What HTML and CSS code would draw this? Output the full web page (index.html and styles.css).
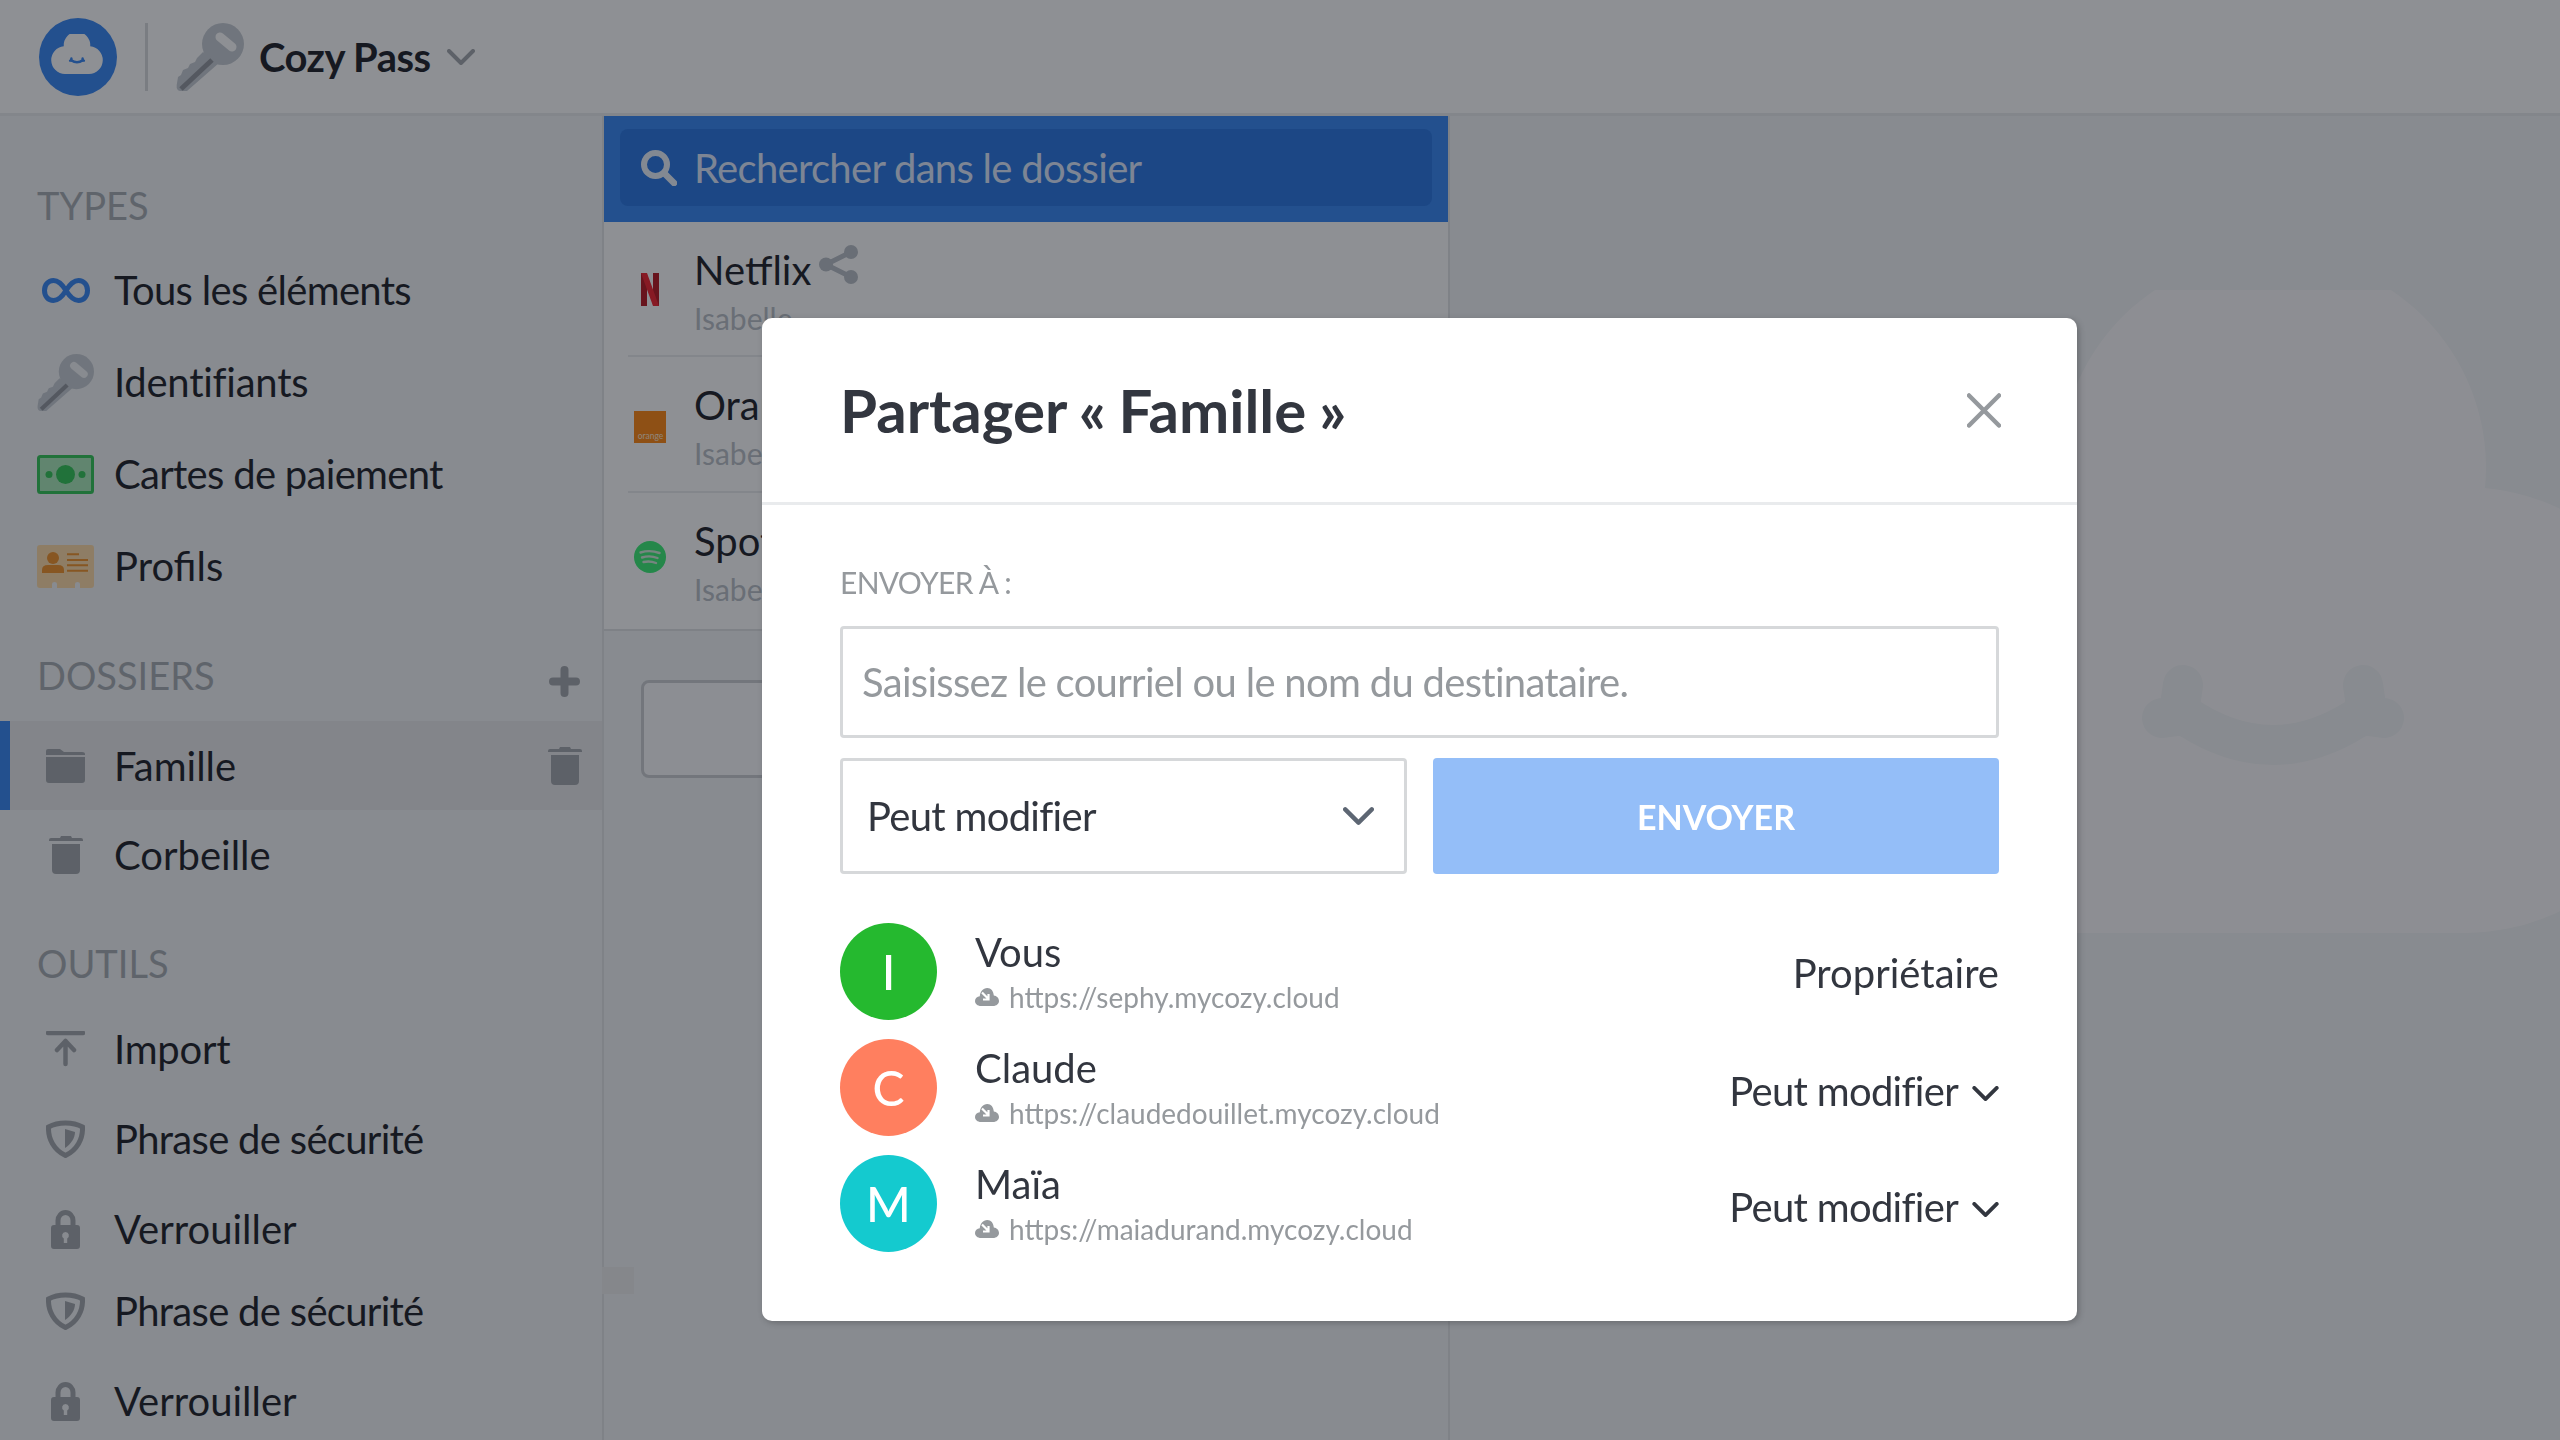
FILE: index.html
```html
<!DOCTYPE html>
<html lang="fr">
<head>
<meta charset="utf-8">
<title>Cozy Pass</title>
<link rel="stylesheet" href="styles.css">
</head>
<body>
<svg class="defs" width="0" height="0" aria-hidden="true">
  <defs>
    <symbol id="cloud" viewBox="0 0 832 643">
      <path fill="currentColor" d="M223 643A223 223 0 0 1 204 198A213 213 0 1 1 628 198A223 223 0 0 1 609 643Z"/>
      <g fill="none" stroke="var(--smile)" stroke-width="40" stroke-linecap="round">
        <path d="M323 422Q416 488 509 422"/>
        <path d="M326 395L322 422M305 428L328 425M506 395L510 422M527 428L504 425"/>
      </g>
    </symbol>
    <mask id="keyhole" maskUnits="userSpaceOnUse" x="0" y="0" width="68" height="68">
      <rect width="68" height="68" fill="#fff"/>
      <path d="M44 14L56 24" stroke="#000" stroke-width="9" stroke-linecap="round"/>
    </mask>
    <symbol id="key" viewBox="0 0 68 68">
      <g mask="url(#keyhole)"><circle cx="47" cy="21" r="21" fill="#c3c9d0"/></g>
      <path fill="#c3c9d0" d="M27 29L21 35L19 39L14 41L12 45L7 47L5 52L2 54L.7 62Q0 68 5 68H11L43 40Z"/>
      <path d="M5 66L36 37" stroke="#8b8f97" stroke-width="5" fill="none"/>
    </symbol>
    <symbol id="trash" viewBox="0 0 34 38">
      <path fill="#9da1a6" d="M12 0H22L23 2H32Q34 2 34 4V5H0V4Q0 2 2 2H11ZM3 8H31V34Q31 38 27 38H7Q3 38 3 34Z"/>
    </symbol>
    <symbol id="shield" viewBox="0 0 39 38">
      <path fill="none" stroke="#9da1a6" stroke-width="5" d="M19.5 3C26 3 32 4.500 36.500 7C37 19 31 30 19.500 35.500C8 30 2 19 2.500 7C7 4.500 13 3 19.500 3Z"/>
      <path fill="#9da1a6" d="M19 9L29 12C29 18 25 24 19 28Z"/>
    </symbol>
    <symbol id="lock" viewBox="0 0 29 39">
      <path fill="none" stroke="#9da1a6" stroke-width="5" d="M7 16V10.500A7.500 8 0 0 1 22 10.500V16"/>
      <path fill="#9da1a6" fill-rule="evenodd" d="M3 15H26Q29 15 29 18V36Q29 39 26 39H3Q0 39 0 36V18Q0 15 3 15ZM14.500 22A3.500 3.500 0 0 0 12.800 28.500V33H16.200V28.500A3.500 3.500 0 0 0 14.500 22Z"/>
    </symbol>
    <symbol id="minicloud" viewBox="0 0 24 18">
      <path fill="#95999d" d="M6 18C2.500 18 0 15.800 0 13C0 10.500 2 8.500 4.800 8.300C5 4 8 0 12.300 0C16 0 18.500 3 18.800 7.500C21.800 7.800 24 10.200 24 13C24 15.800 21.500 18 18 18Z"/>
      <path fill="none" stroke="#fff" stroke-width="2.200" d="M7 4.500L13.500 11M13.500 6V11.500H8"/>
    </symbol>
    <symbol id="chev" viewBox="0 0 28 16">
      <path fill="none" stroke="currentColor" stroke-width="4" stroke-linecap="round" stroke-linejoin="round" d="M2 2L14 14L26 2"/>
    </symbol>
  </defs>
</svg>

<header class="topbar">
  <svg class="logo" viewBox="0 0 78 78">
    <circle cx="39" cy="39" r="39" fill="#297ef2"/>
    <svg class="logo-inner" x="12" y="16" width="52" height="40"><use href="#cloud" width="52" height="40"/></svg>
  </svg>
  <span class="topbar-sep"></span>
  <svg class="topbar-key"><use href="#key"/></svg>
  <span class="app-name">Cozy Pass</span>
  <svg class="topbar-chev"><use href="#chev"/></svg>
</header>

<div class="shell">
  <nav class="sidebar">
    <div class="side-title">TYPES</div>
    <ul class="side-list types">
      <li class="side-item">
        <span class="side-ico"><svg class="ico-inf" viewBox="0 0 48 25"><path fill="none" stroke="#297ef2" stroke-width="5" d="M24 12.500C20 6 16.500 2.500 11.500 2.500C6 2.500 2.500 7 2.500 12.500C2.500 18 6 22.500 11.500 22.500C16.500 22.500 20 19 24 12.500C28 6 31.500 2.500 36.500 2.500C42 2.500 45.500 7 45.500 12.500C45.500 18 42 22.500 36.500 22.500C31.500 22.500 28 19 24 12.500Z"/></svg></span>
        <span class="snug">Tous les éléments</span>
      </li>
      <li class="side-item">
        <span class="side-ico"><svg class="ico-key"><use href="#key"/></svg></span>
        <span class="slight">Identifiants</span>
      </li>
      <li class="side-item">
        <span class="side-ico"><svg class="ico-money" viewBox="0 0 57 39">
          <rect x="1.500" y="1.500" width="54" height="36" rx="2" fill="#a5e8b5" stroke="#25c24a" stroke-width="3"/>
          <circle cx="28.500" cy="19.500" r="9.500" fill="#25c24a"/><circle cx="12" cy="19.500" r="3.500" fill="#25c24a"/><circle cx="45" cy="19.500" r="3.500" fill="#25c24a"/>
        </svg></span>
        <span class="snug">Cartes de paiement</span>
      </li>
      <li class="side-item">
        <span class="side-ico"><svg class="ico-card" viewBox="0 0 57 43">
          <path fill="#ffd9a0" d="M3 0H54Q57 0 57 3V40Q57 43 54 43H43V39Q43 37 40.500 37Q38 37 38 39V43H20V39Q20 37 17.500 37Q15 37 15 39V43H3Q0 43 0 40V3Q0 0 3 0Z"/>
          <circle cx="16" cy="13" r="6" fill="#f08a1a"/><path fill="#f08a1a" d="M5 28V25Q5 20 11 20H21Q27 20 27 25V28Z"/>
          <path stroke="#f08a1a" stroke-width="2" d="M30 9.300H42M30 15H51M30 20.300H51M30 25.700H51"/>
        </svg></span>
        <span>Profils</span>
      </li>
    </ul>

    <div class="side-title side-title-row">DOSSIERS
      <svg class="ico-plus" viewBox="0 0 31 31"><path stroke="#9da1a6" stroke-width="8" stroke-linecap="round" d="M15.500 4V27M4 15.500H27"/></svg>
    </div>
    <ul class="side-list folders">
      <li class="side-item folder active">
        <span class="side-ico"><svg class="ico-folder" viewBox="0 0 39 34"><path fill="#9da1a6" d="M2 0H14L18 3H36Q39 3 39 5V6H0V2Q0 0 2 0ZM0 8H39V31Q39 34 36 34H3Q0 34 0 31Z"/></svg></span>
        <span>Famille</span>
        <svg class="ico-trash end"><use href="#trash"/></svg>
      </li>
      <li class="side-item folder">
        <span class="side-ico"><svg class="ico-trash"><use href="#trash"/></svg></span>
        <span>Corbeille</span>
      </li>
    </ul>

    <div class="side-title">OUTILS</div>
    <ul class="side-list tools">
      <li class="side-item folder">
        <span class="side-ico"><svg class="ico-import" viewBox="0 0 39 36"><path fill="none" stroke="#9da1a6" stroke-width="4.500" stroke-linecap="round" stroke-linejoin="round" d="M2 2H37M19.500 33V10M11 19L19.500 10L28 19"/></svg></span>
        <span class="slight">Import</span>
      </li>
      <li class="side-item folder">
        <span class="side-ico"><svg class="ico-shield"><use href="#shield"/></svg></span>
        <span class="snug">Phrase de sécurité</span>
      </li>
      <li class="side-item folder">
        <span class="side-ico"><svg class="ico-lock"><use href="#lock"/></svg></span>
        <span>Verrouiller</span>
      </li>
    </ul>
    <ul class="side-list tools-again">
      <li class="side-item folder">
        <span class="side-ico"><svg class="ico-shield"><use href="#shield"/></svg></span>
        <span class="snug">Phrase de sécurité</span>
      </li>
      <li class="side-item folder">
        <span class="side-ico"><svg class="ico-lock"><use href="#lock"/></svg></span>
        <span>Verrouiller</span>
      </li>
    </ul>
    <span class="side-strip"></span>
  </nav>

  <section class="column">
    <div class="search-bar">
      <div class="search-box">
        <svg class="ico-search" viewBox="0 0 36 36"><circle cx="14.500" cy="14.500" r="11.500" fill="none" stroke="#fff" stroke-width="6"/><path d="M23 23L33 33" stroke="#fff" stroke-width="6.500" stroke-linecap="round"/></svg>
        <span class="snug">Rechercher dans le dossier</span>
      </div>
    </div>
    <ul class="vault">
      <li class="vault-row">
        <span class="vault-ico"><svg class="ico-netflix" viewBox="0 0 18 33"><path fill="#b20710" d="M0 0H6V33L0 33ZM12 0H18V33H12Z"/><path fill="#f0121f" d="M0 0H6L18 33H12Z"/></svg></span>
        <div class="vault-text">
          <div class="vault-name">Netflix <svg class="ico-share" viewBox="0 0 39 39"><circle cx="7" cy="19.500" r="7" fill="#b5bbc2"/><circle cx="32" cy="7" r="7" fill="#b5bbc2"/><circle cx="32" cy="32" r="7" fill="#b5bbc2"/><path d="M7 19.500L32 7M7 19.500L32 32" stroke="#b5bbc2" stroke-width="5"/></svg></div>
          <div class="vault-sub">Isabelle</div>
        </div>
      </li>
      <li class="vault-row">
        <span class="vault-ico orange-slot"><span class="orange-logo">orange</span></span>
        <div class="vault-text">
          <div class="vault-name">Orange</div>
          <div class="vault-sub">Isabelle</div>
        </div>
      </li>
      <li class="vault-row">
        <span class="vault-ico spotify-slot"><svg class="ico-spotify" viewBox="0 0 32 32"><circle cx="16" cy="16" r="16" fill="#2ced6b"/><path fill="none" stroke="#cfe9d6" stroke-width="2.400" stroke-linecap="round" d="M6.500 11.500Q16 8.500 25.500 12M8 16.500Q16 14 23.500 17M9.500 21Q16 19.500 22 22"/></svg></span>
        <div class="vault-text">
          <div class="vault-name">Spotify</div>
          <div class="vault-sub">Isabelle</div>
        </div>
      </li>
    </ul>
    <div class="ghost-button"></div>
  </section>

  <main class="pane">
    <svg class="bigcloud"><use href="#cloud"/></svg>
  </main>
</div>

<div class="overlay">
  <div class="modal">
    <div class="modal-head">
      <h1 class="modal-title">Partager « Famille »</h1>
      <svg class="ico-close" viewBox="0 0 34 35"><path stroke="#95999d" stroke-width="4.500" stroke-linecap="round" d="M2 2.500L32 32.500M32 2.500L2 32.500"/></svg>
    </div>
    <div class="modal-body">
      <label class="send-label snug">ENVOYER À :</label>
      <div class="recipient snug">Saisissez le courriel ou le nom du destinataire.</div>
      <div class="send-row">
        <div class="perm-select"><span class="snug">Peut modifier</span>
          <svg class="select-chev"><use href="#chev"/></svg>
        </div>
        <div class="send-btn">ENVOYER</div>
      </div>
      <ul class="members">
        <li class="member">
          <span class="avatar green">I</span>
          <div class="member-text">
            <div class="member-name">Vous</div>
            <div class="member-url"><svg class="ico-mini"><use href="#minicloud"/></svg>https://sephy.mycozy.cloud</div>
          </div>
          <span class="member-role">Propriétaire</span>
        </li>
        <li class="member">
          <span class="avatar coral">C</span>
          <div class="member-text">
            <div class="member-name">Claude</div>
            <div class="member-url"><svg class="ico-mini"><use href="#minicloud"/></svg>https://claudedouillet.mycozy.cloud</div>
          </div>
          <span class="member-role editable"><span class="snug">Peut modifier</span> <svg class="role-chev"><use href="#chev"/></svg></span>
        </li>
        <li class="member">
          <span class="avatar cyan">M</span>
          <div class="member-text">
            <div class="member-name">Maïa</div>
            <div class="member-url"><svg class="ico-mini"><use href="#minicloud"/></svg>https://maiadurand.mycozy.cloud</div>
          </div>
          <span class="member-role editable"><span class="snug">Peut modifier</span> <svg class="role-chev"><use href="#chev"/></svg></span>
        </li>
      </ul>
    </div>
  </div>
</div>
</body>
</html>
```
FILE: styles.css
```css
* { box-sizing: border-box; }
html, body { margin: 0; height: 100%; }
body {
  width: 2560px;
  height: 1440px;
  overflow: hidden;
  background: #fff;
  font-family: Lato, "Noto Sans", sans-serif;
  font-size: 40px;
  color: #0f1118;
  display: flex;
  flex-direction: column;
}
ul { list-style: none; margin: 0; padding: 0; }
svg { display: block; }
.defs { position: absolute; }
.snug { letter-spacing: -.7px; }
.slight { letter-spacing: -.25px; }

/* top bar */
.topbar {
  flex: none;
  height: 116px;
  padding-left: 39px;
  display: flex;
  align-items: center;
  background: #fff;
  border-bottom: 3px solid #e9ebed;
  --smile: #297ef2;
  color: #fff;
}
.logo { width: 78px; height: 78px; }
.topbar-sep { width: 3px; height: 68px; margin: 0 28px 0 28px; background: #d6d8da; }
.topbar-key { width: 68px; height: 68px; margin-left: 0; }
.app-name { margin-left: 15px; font-weight: 700; color: #0f1118; letter-spacing: -.55px; }
.topbar-chev { width: 28px; height: 16px; margin-left: 16px; color: #9da1a6; }

.shell { flex: 1; display: flex; min-height: 0; }

/* sidebar */
.sidebar {
  position: relative;
  flex: none;
  width: 604px;
  padding-top: 64px;
  background: #f2f4f6;
  border-right: 2px solid #e1e3e5;
}
.side-title {
  height: 50px;
  padding: 0 37px;
  display: flex;
  align-items: center;
  justify-content: space-between;
  color: #a1a7ad;
  font-size: 38px;
  line-height: 50px;
}
.side-list.types { margin: 14px 0 38px; }
.side-list.folders { margin: 21px 0 38px; }
.side-list.tools { margin-top: 16px; }
.side-list.tools-again { margin-top: -8px; }
.side-item {
  height: 92px;
  display: flex;
  align-items: center;
  padding-left: 37px;
  gap: 20px;
}
.side-item.folder { height: 90px; }
.side-item.active {
  height: 89px;
  background: #e8e9eb;
  box-shadow: inset 10px 0 0 #297ef2;
}
.side-ico { flex: none; width: 57px; display: flex; justify-content: center; }
.ico-inf { width: 48px; height: 25px; }
.ico-key { width: 57px; height: 57px; }
.ico-money { width: 57px; height: 39px; }
.ico-card { width: 57px; height: 43px; }
.ico-plus { width: 31px; height: 31px; margin: 12px -15px 0 0; }
.ico-folder { width: 39px; height: 34px; }
.ico-trash { width: 34px; height: 38px; }
.ico-trash.end { margin-left: auto; margin-right: 20px; }
.ico-import { width: 39px; height: 36px; }
.ico-shield { width: 39px; height: 38px; }
.ico-lock { width: 29px; height: 39px; }
.side-strip {
  position: absolute;
  left: 602px;
  top: 1151px;
  width: 32px;
  height: 27px;
  background: #eceded;
}

/* middle column */
.column {
  flex: none;
  width: 846px;
  background: #f2f4f6;
  border-right: 2px solid #e1e3e5;
}
.search-bar {
  height: 106px;
  padding: 13px 16px;
  background: #297ef2;
}
.search-box {
  height: 77px;
  padding-left: 21px;
  display: flex;
  align-items: center;
  gap: 17px;
  background: #1a6de0;
  border-radius: 8px;
  color: #dde8ff;
}
.ico-search { width: 36px; height: 36px; opacity: .9; }
.vault { background: #fff; border-bottom: 2px solid #dfe1e3; }
.vault-row { height: 136px; display: flex; position: relative; padding-left: 30px; }
.vault-row:first-child { height: 135px; }
.vault-row:nth-child(-n+2)::after {
  content: "";
  position: absolute;
  left: 24px;
  right: 24px;
  bottom: 0;
  height: 2px;
  background: #e9ebed;
}
.vault-ico { flex: none; width: 32px; display: flex; align-items: center; justify-content: center; }
.orange-slot { padding-top: 4px; }
.spotify-slot { padding-bottom: 8px; }
.ico-netflix { width: 18px; height: 33px; }
.orange-logo {
  flex: none;
  width: 32px;
  height: 32px;
  padding: 0 0 3px 1px;
  display: flex;
  align-items: flex-end;
  justify-content: center;
  background: #ff7f00;
  color: #ffe6cc;
  font-size: 8.500px;
  line-height: 1;
}
.ico-spotify { width: 32px; height: 32px; }
.vault-text { margin-left: 28px; padding-top: 22px; }
.vault-name { display: flex; align-items: flex-start; height: 52px; line-height: 52px; gap: 8px; }
.vault-sub { margin-top: 0; color: #b5bbc2; font-size: 30px; line-height: 44px; }
.ico-share { width: 39px; height: 39px; margin-top: 1px; }
.ghost-button {
  width: 772px;
  height: 98px;
  margin: 49px 0 0 37px;
  border: 3px solid #c8cbcf;
  border-radius: 8px;
  background: #fbfbfc;
}

/* right pane */
.pane {
  flex: 1;
  min-width: 0;
  overflow: hidden;
  padding: 174px 0 0 407px;
  background: #f2f4f6;
  color: #fdfbfc;
  --smile: #f2f4f6;
}
.bigcloud { width: 832px; height: 643px; flex: none; }

/* modal */
.overlay {
  position: fixed;
  inset: 0;
  padding: 318px 0 0 762px;
  background: rgba(29, 33, 42, .5);
}
.modal {
  width: 1315px;
  height: 1003px;
  background: #fff;
  border-radius: 10px;
  box-shadow: 2px 2px 6px rgba(0, 0, 0, .22);
  color: #32363f;
}
.modal-head {
  height: 187px;
  padding: 0 76px 0 78px;
  display: flex;
  align-items: center;
  justify-content: space-between;
  border-bottom: 3px solid #e9ebed;
}
.modal-title { margin: 0; font-size: 60px; font-weight: 700; word-spacing: -2px; }
.ico-close { width: 34px; height: 35px; }
.modal-body { padding: 57px 78px 0; }
.send-label { display: block; height: 40px; line-height: 40px; font-size: 30px; color: #95999d; }
.recipient {
  height: 112px;
  margin-top: 24px;
  padding: 0 19px;
  display: flex;
  align-items: center;
  border: 3px solid #d6d8da;
  border-radius: 4px;
  color: #95999d;
}
.send-row { display: flex; gap: 26px; margin-top: 20px; }
.perm-select {
  flex: none;
  width: 567px;
  height: 116px;
  padding: 0 30px 0 24px;
  display: flex;
  align-items: center;
  justify-content: space-between;
  border: 3px solid #d6d8da;
  border-radius: 4px;
}
.select-chev { width: 31px; height: 18px; color: #5d6673; }
.send-btn {
  flex: 1;
  height: 116px;
  display: flex;
  align-items: center;
  justify-content: center;
  background: #94bef8;
  border-radius: 4px;
  color: #fff;
  font-size: 34px;
  font-weight: 700;
}
.members { margin-top: 49px; display: flex; flex-direction: column; gap: 19px; }
.member { height: 97px; display: flex; align-items: center; }
.avatar {
  flex: none;
  width: 97px;
  height: 97px;
  border-radius: 50%;
  display: flex;
  align-items: center;
  justify-content: center;
  color: #fff;
  font-size: 48px;
  font-weight: 500;
}
.green { background: #25b92f; }
.coral { background: #ff7f5f; }
.cyan { background: #14cacf; }
.member-text { margin-left: 38px; padding-top: 5px; }
.member-name { height: 46px; line-height: 46px; }
.member-url { height: 44px; display: flex; align-items: center; gap: 10px; font-size: 28px; color: #95999d; }
.ico-mini { width: 24px; height: 18px; }
.member-role { margin-left: auto; padding-top: 3px; }
.member-role.editable { display: flex; align-items: center; gap: 14px; padding-top: 6px; }
.role-chev { width: 27px; height: 15px; margin-top: 5px; color: #32363f; }
```
